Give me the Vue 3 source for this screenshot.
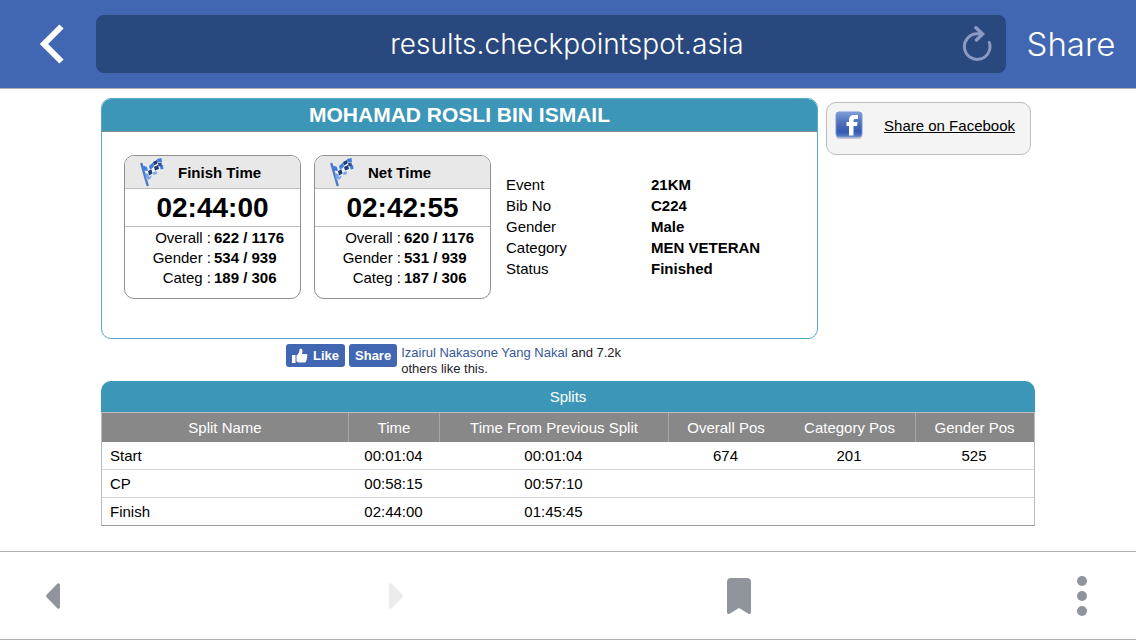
<script setup>
import { ref } from 'vue'

const address = ref('results.checkpointspot.asia')

const times = [
  {
    title: 'Finish Time',
    time: '02:44:00',
    ranks: [
      { label: 'Overall', value: '622 / 1176' },
      { label: 'Gender', value: '534 / 939' },
      { label: 'Categ', value: '189 / 306' },
    ],
  },
  {
    title: 'Net Time',
    time: '02:42:55',
    ranks: [
      { label: 'Overall', value: '620 / 1176' },
      { label: 'Gender', value: '531 / 939' },
      { label: 'Categ', value: '187 / 306' },
    ],
  },
]

const details = [
  { label: 'Event', value: '21KM' },
  { label: 'Bib No', value: 'C224' },
  { label: 'Gender', value: 'Male' },
  { label: 'Category', value: 'MEN VETERAN' },
  { label: 'Status', value: 'Finished' },
]

const columns = ['Split Name', 'Time', 'Time From Previous Split', 'Overall Pos', 'Category Pos', 'Gender Pos']

const splits = [
  ['Start', '00:01:04', '00:01:04', '674', '201', '525'],
  ['CP', '00:58:15', '00:57:10', '', '', ''],
  ['Finish', '02:44:00', '01:45:45', '', '', ''],
]
</script>

<template>
  <div class="app">
    <header class="topbar">
      <button class="back" type="button" aria-label="Back">
        <svg width="24" height="40" viewBox="0 0 24 40">
          <path d="M21.500 2.500 4 20l17.500 17.500" fill="none" stroke="#fff" stroke-width="6" />
        </svg>
      </button>
      <div class="address">
        <input v-model="address" type="text" aria-label="Address" spellcheck="false" />
        <button class="reload" type="button" aria-label="Reload">
          <svg width="30" height="36" viewBox="0 0 30 36" fill="none" stroke="#8b9ac2" stroke-width="3" stroke-linecap="round">
            <path d="M27.300 16.500A12.800 12.800 0 1 1 15 7.800h4" />
            <path d="M14 1.800 20.500 8 14.500 14" stroke-width="3.500" />
          </svg>
        </button>
      </div>
      <button class="share" type="button">Share</button>
    </header>

    <main class="page">
      <div class="summary">
        <section class="card">
          <h1>MOHAMAD ROSLI BIN ISMAIL</h1>
          <div class="card-body">
            <article v-for="t in times" :key="t.title" class="time-box">
              <h2>
                <svg width="24" height="30" viewBox="0 0 24 30">
                  <path d="M3 8c3 3 6 2 8-1s5-5 11-5c-1 5 0 9 1 12-5 0-8 0-11 3s-4 4-7 3z" fill="#eef4fc" />
                  <path d="M1.500 7 7.500 28" stroke="#4c7cc4" stroke-width="2.500" stroke-linecap="round" />
                  <path d="M3 8.500l4 1.500 1 4-4-.5zM9 9l4-3.500 1 4-4 3.500zM17 2l4.500-1 .5 4-4.500.5zM20 9l3-1 .5 4-3 .5z" fill="#3f7ae0" />
                  <path d="M8 14l3.500-1.500 1 4L9 18.500zM14 10l4-2 1 4-4 1.500zM13 5l4-2 .5 3.500-3.500 2z" fill="#1f3b70" />
                  <path d="M18 6l3.500-.5.5 3.500-3.500.5z" fill="#2b4f90" />
                  <path d="M5 16l3.500 1 .5 4-3 2zM13 15.500l3.500-1.500.5 3-3.500 1zM9 20l3-1.500-1.500 3-2.500 2z" fill="#78a4ea" />
                </svg>
                <span>{{ t.title }}</span>
              </h2>
              <p class="clock">{{ t.time }}</p>
              <dl class="ranks">
                <template v-for="r in t.ranks" :key="r.label">
                  <dt>{{ r.label }} :</dt>
                  <dd>{{ r.value }}</dd>
                </template>
              </dl>
            </article>
            <dl class="details">
              <template v-for="d in details" :key="d.label">
                <dt>{{ d.label }}</dt>
                <dd>{{ d.value }}</dd>
              </template>
            </dl>
          </div>
        </section>

        <aside class="fb-share">
          <svg width="28" height="28" viewBox="0 0 28 28">
            <defs>
              <linearGradient id="fb-fill" x1="0" y1="0" x2="0" y2="1">
                <stop offset="0" stop-color="#7f9ddb" />
                <stop offset="0.400" stop-color="#5272ba" />
                <stop offset="0.800" stop-color="#3459b0" />
                <stop offset="1" stop-color="#5f82cc" />
              </linearGradient>
            </defs>
            <rect x="1" y="2" width="26" height="26" rx="3" fill="#c9cbd0" />
            <rect x="1" y="1" width="26" height="25" rx="3" fill="url(#fb-fill)" stroke="#7b97d0" />
            <path d="M14 24.500V15h-2.500v-4H14V9c0-3.500 2-5 5-5h4v4h-2.500c-1.500 0-2 .5-2 1.500V11h4l-.5 4h-3.500v9.500z" fill="#fff" />
          </svg>
          <a href="#">Share on Facebook</a>
        </aside>
      </div>

      <div class="social">
        <button type="button">
          <svg width="16" height="16" viewBox="0 0 16 16" fill="#fff">
            <path d="M0 7h3.500v8H0zM4.500 7.500C6.500 6 7.500 4 7.500 1.500 7.500.5 10.500.2 10.500 3c0 1.200-.4 2.200-.7 3H14c1.600 0 1.800 2 .8 2.500.8.700.6 1.900-.3 2.300.5.800.2 1.800-.7 2.100.2 1-.4 1.600-1.600 1.600H8c-1.500 0-2.300-.6-3.500-1z" />
          </svg>
          Like
        </button>
        <button type="button">Share</button>
        <p><a href="#">Izairul Nakasone Yang Nakal</a> and 7.2k<br />others like this.</p>
      </div>

      <table class="splits">
        <caption>Splits</caption>
        <colgroup>
          <col class="c-name" />
          <col class="c-time" />
          <col class="c-prev" />
          <col class="c-overall" />
          <col class="c-category" />
          <col class="c-gender" />
        </colgroup>
        <thead>
          <tr>
            <th v-for="c in columns" :key="c" scope="col">{{ c }}</th>
          </tr>
        </thead>
        <tbody>
          <tr v-for="row in splits" :key="row[0]">
            <td v-for="(cell, i) in row" :key="i">{{ cell }}</td>
          </tr>
        </tbody>
      </table>
    </main>

    <nav class="toolbar" aria-label="Browser">
      <button type="button" aria-label="Previous page">
        <svg width="14" height="26" viewBox="0 0 14 26">
          <path d="M11.500.5Q14-.5 14 2v22q0 2.500-2.500 1.500L.6 14.200Q-.4 13 .6 11.800z" fill="#90949c" />
        </svg>
      </button>
      <button type="button" aria-label="Next page" disabled>
        <svg width="14" height="26" viewBox="0 0 14 26">
          <path d="M2.500.5Q0-.5 0 2v22q0 2.500 2.500 1.500L13.400 14.200Q14.400 13 13.400 11.800z" fill="#ebebeb" />
        </svg>
      </button>
      <button type="button" aria-label="Bookmark">
        <svg width="24" height="36" viewBox="0 0 24 36">
          <path d="M4 0h16q4 0 4 4v30q0 3-3 1.500L12 30l-9 5.500Q0 37 0 34V4q0-4 4-4z" fill="#90949c" />
        </svg>
      </button>
      <button type="button" aria-label="More">
        <svg width="10" height="40" viewBox="0 0 10 40" fill="#90949c">
          <circle cx="5" cy="5" r="5" />
          <circle cx="5" cy="20" r="5" />
          <circle cx="5" cy="35" r="5" />
        </svg>
      </button>
    </nav>
  </div>
</template>

<style>
body {
  background: #fff;
}
</style>

<style scoped>
.app {
  display: flex;
  flex-direction: column;
  min-height: 100vh;
  box-sizing: border-box;
  color: #000;
  font: 15px/21px "Liberation Sans", Arial, sans-serif;
}

h1, h2, p, dl, dd {
  margin: 0;
}

button {
  display: flex;
  align-items: center;
  justify-content: center;
  padding: 0;
  border: 0;
  background: none;
  font: inherit;
}

svg {
  display: block;
  flex: none;
}

.topbar {
  display: flex;
  align-items: center;
  height: 88px;
  border-bottom: 1px solid #b2b2b2;
  background: #4267b2;
  font-family: Inter, "Liberation Sans", sans-serif;
  font-weight: 300;
}

.back {
  width: 96px;
  height: 58px;
  padding-left: 8px;
}

.address {
  display: flex;
  flex: 1;
  min-width: 0;
  height: 58px;
  padding-left: 80px;
  border-radius: 8px;
  background: #29487d;
}

.address input {
  flex: 1;
  min-width: 0;
  padding: 0;
  border: 0;
  outline: 0;
  background: none;
  color: #fff;
  font: inherit;
  font-size: 28px;
  line-height: 34px;
  text-align: center;
}

.reload {
  width: 48px;
  padding-right: 10px;
}

.share {
  width: 130px;
  color: #fff;
  font-size: 33px;
  line-height: 40px;
}

.page {
  padding: 9px 101px 24px;
}

.summary {
  display: flex;
  align-items: flex-start;
  gap: 8px;
  padding-right: 4px;
}

.card {
  flex: 1;
  min-height: 241px;
  box-sizing: border-box;
  overflow: hidden;
  border: 1px solid #5aabc8;
  border-radius: 10px;
}

.card h1 {
  border-bottom: 1px solid #8a8a8a;
  background: #3c96b8;
  color: #fff;
  font-size: 21px;
  line-height: 32px;
  text-align: center;
}

.card-body {
  display: flex;
  align-items: flex-start;
  gap: 13px;
  padding: 23px 22px;
}

.time-box {
  width: 175px;
  height: 142px;
  overflow: hidden;
  border: 1px solid #8f8f8f;
  border-radius: 10px;
}

.time-box h2 {
  display: flex;
  align-items: center;
  gap: 14px;
  height: 32px;
  padding-left: 15px;
  border-bottom: 1px solid #bdbdbd;
  background: #e8e8e8;
  font-size: 15px;
}

.clock {
  border-bottom: 1px solid #bdbdbd;
  font-size: 28px;
  font-weight: bold;
  line-height: 37px;
  text-align: center;
}

.ranks {
  display: grid;
  grid-template-columns: 86px 1fr;
  column-gap: 3px;
  line-height: 20px;
  padding-top: 1px;
}

.ranks dt {
  text-align: right;
}

.ranks dd,
.details dd {
  font-weight: bold;
}

.details {
  display: grid;
  grid-template-columns: 145px 1fr;
  padding: 19px 0 0 2px;
}

.fb-share {
  display: flex;
  align-items: flex-start;
  justify-content: space-between;
  width: 205px;
  height: 53px;
  box-sizing: border-box;
  margin-top: 4px;
  padding: 8px 15px 0 8px;
  border: 1px solid #bdbdbd;
  border-radius: 10px;
  background: #f4f4f4;
}

.fb-share a {
  padding-top: 4px;
  color: #000;
}

.social {
  display: flex;
  align-items: flex-start;
  gap: 4px;
  margin: 5px 0 0 185px;
  font-size: 13px;
  line-height: 16px;
}

.social button {
  gap: 5px;
  height: 23px;
  padding: 0 6px;
  border-radius: 3px;
  background: #4267b2;
  color: #fff;
  font-weight: bold;
}

.social p {
  padding-top: 1px;
  color: #1d2129;
}

.social a {
  color: #365899;
  text-decoration: none;
}

.splits {
  width: 100%;
  margin-top: 4px;
  table-layout: fixed;
  border: 1px solid #bdbdbd;
  border-bottom-color: #999;
  border-spacing: 0;
}

.splits caption {
  height: 31px;
  border-radius: 10px 10px 0 0;
  background: #3c96b8;
  color: #fff;
  line-height: 31px;
}

.c-name { width: 247px; }
.c-time { width: 91px; }
.c-prev { width: 229px; }
.c-overall { width: 115px; }
.c-category { width: 132px; }
.c-gender { width: 118px; }

.splits th {
  padding: 4px 0;
  border-right: 1px solid #a6a6a6;
  background: #888;
  color: #fff;
  font-weight: normal;
}

.splits th:nth-child(4),
.splits th:last-child {
  border-right-color: #888;
}

.splits td {
  height: 27px;
  padding: 0 2px 0 0;
  border-bottom: 1px solid #d5d5d5;
  text-align: center;
}

.splits td:first-child {
  padding-left: 8px;
  text-align: left;
}

.splits tr:last-child td {
  border-bottom: 0;
}

.toolbar {
  display: flex;
  align-items: center;
  justify-content: space-between;
  height: 87px;
  margin-top: auto;
  padding: 0 30px 0 29px;
  border-top: 1px solid #b2b2b2;
  border-bottom: 1px solid #b2b2b2;
}

.toolbar button {
  width: 48px;
  height: 48px;
}
</style>
